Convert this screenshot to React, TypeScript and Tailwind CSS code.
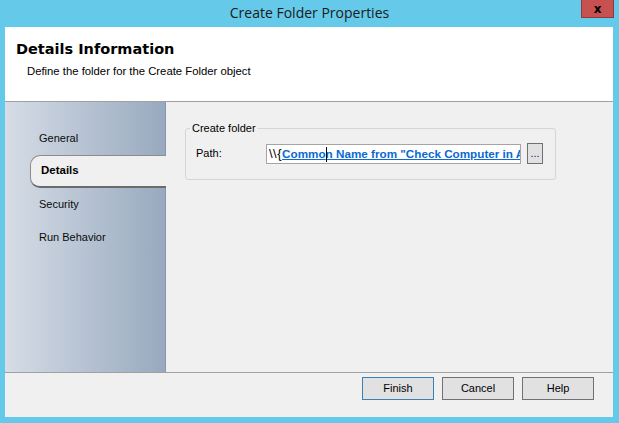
import type { ReactNode } from 'react';

const UI = "font-['Liberation_Sans',Arial,sans-serif]";

function NavItem({ label, active }: { label: string; active?: boolean }) {
  if (active) {
    return (
      <div className="ml-[25px] -mr-px h-[33px] flex items-center pl-[10px] rounded-l-[10px] border border-r-0 border-[#8c8c8c] border-b-2 border-b-[#6b6b6b] bg-[#f0f0f0] text-[11.5px] font-bold text-black">
        {label}
      </div>
    );
  }
  return <div className="h-[33px] flex items-center pl-[34px] text-[11px] text-[#0a0a0a]">{label}</div>;
}

function WinButton({ children, primary }: { children: ReactNode; primary?: boolean }) {
  return (
    <button
      type="button"
      className={
        primary
          ? 'w-[72px] h-[23px] bg-[#e1e1e1] border border-[#3c7fb1] text-[11px] text-black'
          : 'w-[72px] h-[23px] bg-[#e1e1e1] border border-[#707070] text-[11px] text-black'
      }
    >
      {children}
    </button>
  );
}

export default function App() {
  return (
    <div className={`w-[619px] h-[423px] bg-[#65c9ea] flex flex-col overflow-hidden ${UI}`}>
      {/* title bar */}
      <div className="relative h-[27px] flex items-center justify-center shrink-0">
        <span className="font-['Open_Sans',sans-serif] text-[14px] text-[#1a1a1a] -mt-[3px]">Create Folder Properties</span>
        <button
          type="button"
          className="absolute right-[5px] top-0 w-[33px] h-[18px] bg-[#c75050] border border-t-0 border-[#8e3b3b] flex items-center justify-center text-[12px] font-bold text-black font-['DejaVu_Sans',sans-serif]"
        >
          x
        </button>
      </div>

      <div className="ml-[5px] mr-[6px] h-[390px] flex flex-col bg-[#f0f0f0]">
        {/* header */}
        <div className="h-[75px] bg-white border-b border-[#a0a0a0] shrink-0 pl-[11px] pt-[13px]">
          <div className="font-['DejaVu_Sans',sans-serif] font-bold text-[14.5px] leading-[18px] text-black">Details Information</div>
          <div className="mt-[6px] ml-[11px] text-[11.3px] leading-[14px] text-black">Define the folder for the Create Folder object</div>
        </div>

        {/* main */}
        <div className="h-[270px] flex shrink-0">
          <div className="w-[161px] border-r border-[#8797ac] bg-gradient-to-r from-[#d6dde6] to-[#98a9bf] pt-[20px] flex flex-col">
            <NavItem label="General" />
            <NavItem label="Details" active />
            <NavItem label="Security" />
            <NavItem label="Run Behavior" />
          </div>

          <div className="flex-1 pl-[19px] pt-[20px]">
            <fieldset className="w-[371px] border border-[#d5d5d5] rounded-[3px] pl-[10px] pt-[8px] pb-[15px]">
              <legend className="ml-[-6px] px-[2px] text-[11px] leading-[13px] text-black">Create folder</legend>
              <div className="flex items-center">
                <span className="w-[70px] text-[11px] text-black">Path:</span>
                <div className="w-[255px] h-[20px] bg-white border border-[#a5a5a5] flex items-center pl-[2px] overflow-hidden whitespace-nowrap text-[11.7px]">
                  <span className="text-black text-[13px] tracking-[0.5px]">\\{'{'}</span>
                  <span className="font-bold text-[#0a6ad1] underline">
                    Commo
                    <span className="relative inline-block w-0 h-[12px] align-middle">
                      <span className="absolute left-0 top-[-2px] w-px h-[15px] bg-black" />
                    </span>
                    n Name from "Check Computer in A
                  </span>
                </div>
                <button
                  type="button"
                  className="ml-[6px] w-[16px] h-[21px] bg-[#e1e1e1] border border-[#707070] text-[11px] leading-[12px] text-[#1a1a6a] flex items-end justify-center pb-[4px]"
                >
                  ...
                </button>
              </div>
            </fieldset>
          </div>
        </div>

        {/* footer */}
        <div className="flex-1 border-t border-[#a0a0a0] flex justify-end items-start gap-[8px] pt-[4px] pr-[19px]">
          <WinButton primary>Finish</WinButton>
          <WinButton>Cancel</WinButton>
          <WinButton>Help</WinButton>
        </div>
      </div>
    </div>
  );
}
